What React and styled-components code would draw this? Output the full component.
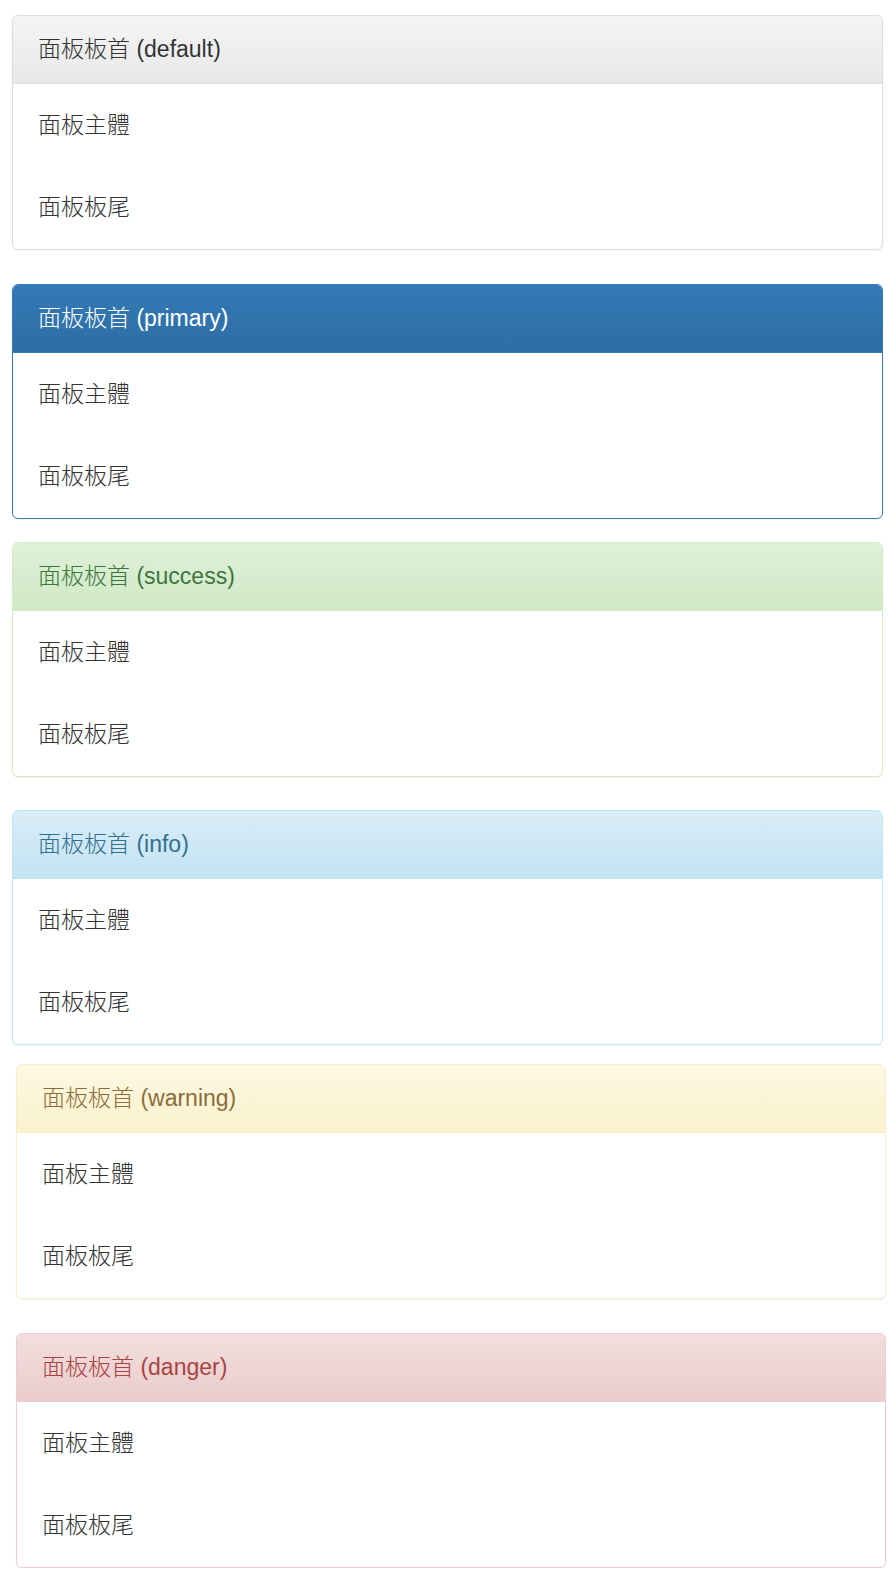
import React from "react";
import styled, { createGlobalStyle } from "styled-components";

const Global = createGlobalStyle`
  html, body {
    margin: 0;
    padding: 0;
    background: #fff;
  }
  body {
    font-family: "Liberation Sans", "Noto Sans CJK TC", Arial, sans-serif;
    color: #333;
  }
`;

const variants = {
  default: { border: "#ddd", from: "#f5f5f5", to: "#e8e8e8", text: "#333" },
  primary: { border: "#337ab7", from: "#337ab7", to: "#2e6da4", text: "#fff" },
  success: { border: "#d6e9c6", from: "#dff0d8", to: "#d0e9c6", text: "#3c763d" },
  info: { border: "#bce8f1", from: "#d9edf7", to: "#c4e3f3", text: "#31708f" },
  warning: { border: "#faebcc", from: "#fcf8e3", to: "#faf2cc", text: "#8a6d3b" },
  danger: { border: "#ebccd1", from: "#f2dede", to: "#ebcccc", text: "#a94442" },
};

const Page = styled.div`
  display: flex;
  flex-direction: column;
  padding-top: 15px;
`;

const Panel = styled.section`
  box-sizing: border-box;
  margin-top: ${(p) => p.$gap}px;
  margin-left: ${(p) => p.$left}px;
  width: ${(p) => p.$width}px;
  height: 235px;
  border: 1px solid ${(p) => variants[p.$variant].border};
  border-radius: 6px;
  background: #fff;
  box-shadow: 0 1px 2px rgba(0, 0, 0, 0.05);
  overflow: hidden;
  display: flex;
  flex-direction: column;
`;

const Heading = styled.div`
  box-sizing: border-box;
  height: 68px;
  padding: 17px 25px;
  font-size: 23px;
  font-weight: 300;
  line-height: 33px;
  color: ${(p) => variants[p.$variant].text};
  background-image: linear-gradient(
    to bottom,
    ${(p) => variants[p.$variant].from} 0%,
    ${(p) => variants[p.$variant].to} 100%
  );
  border-bottom: 1px solid ${(p) => variants[p.$variant].border};
`;

const Section = styled.div`
  box-sizing: border-box;
  height: ${(p) => p.$height}px;
  padding: 24px 25px 0 25px;
  font-size: 23px;
  font-weight: 300;
  line-height: 34px;
  color: #333;
`;

const panels = [
  { variant: "default", gap: 0, left: 12, width: 871 },
  { variant: "primary", gap: 34, left: 12, width: 871 },
  { variant: "success", gap: 23, left: 12, width: 871 },
  { variant: "info", gap: 33, left: 12, width: 871 },
  { variant: "warning", gap: 19, left: 16, width: 870 },
  { variant: "danger", gap: 34, left: 16, width: 870 },
];

export default function App() {
  return (
    <>
      <Global />
      <Page>
        {panels.map((p) => (
          <Panel
            key={p.variant}
            $variant={p.variant}
            $gap={p.gap}
            $left={p.left}
            $width={p.width}
          >
            <Heading $variant={p.variant}>面板板首 ({p.variant})</Heading>
            <Section $height={82}>面板主體</Section>
            <Section $height={83}>面板板尾</Section>
          </Panel>
        ))}
      </Page>
    </>
  );
}
